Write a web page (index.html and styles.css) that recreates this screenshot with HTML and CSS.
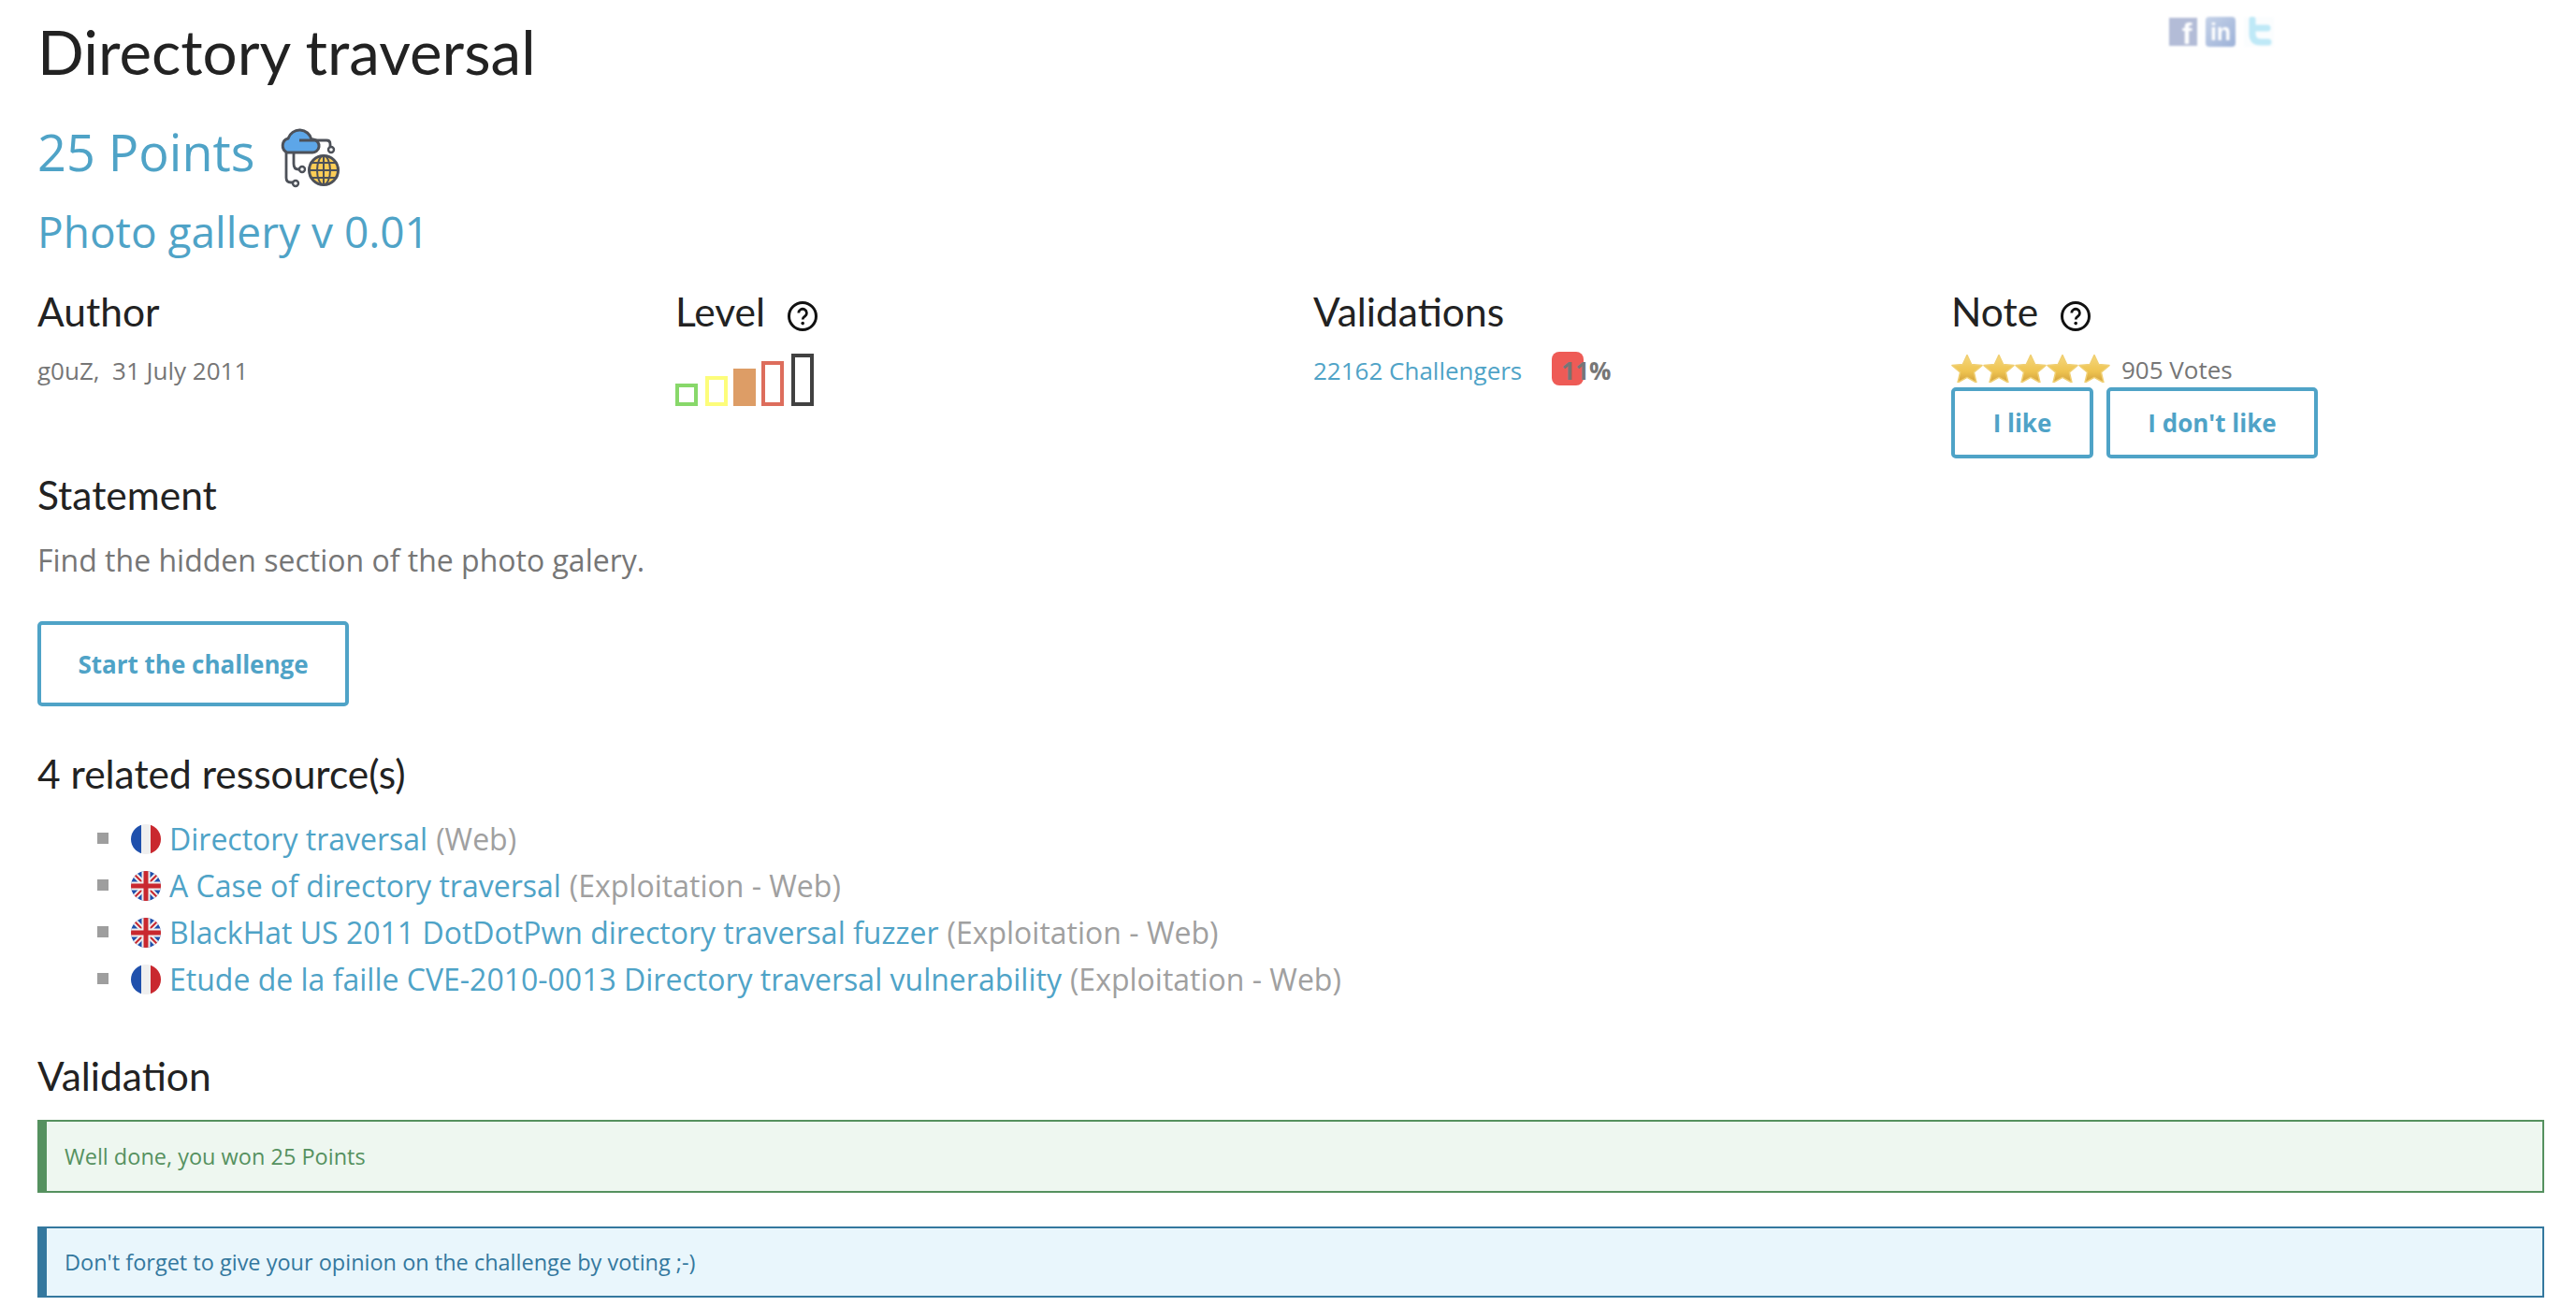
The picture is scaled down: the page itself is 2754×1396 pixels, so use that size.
FILE: index.html
```html
<!DOCTYPE html>
<html lang="en">
<head>
<meta charset="utf-8">
<title>Directory traversal</title>
<link rel="stylesheet" href="styles.css">
</head>
<body>
<svg class="defs" width="0" height="0">
  <defs>
    <linearGradient id="stargrad" x1="0" y1="0" x2="0" y2="1">
      <stop offset="0" stop-color="#f5d77c"/>
      <stop offset="0.6" stop-color="#eec350"/>
      <stop offset="1" stop-color="#d19f3c"/>
    </linearGradient>
    <clipPath id="round"><circle cx="16" cy="16" r="16"/></clipPath>
    <symbol id="star" viewBox="0 0 34 30">
      <path d="M17 0.5 L21.600 10.400 L33 11.600 L24.400 19 L27 30 L17 24.400 L7 30 L9.600 19 L1 11.600 L12.400 10.400 Z" fill="url(#stargrad)" stroke="#f0cf72" stroke-width="1.500" stroke-linejoin="round"/>
    </symbol>
    <symbol id="help" viewBox="0 0 32 32">
      <circle cx="16" cy="16" r="14.500" fill="none" stroke="#111" stroke-width="3"/>
      <path d="M11.800 12.600 a4.300 4.300 0 1 1 6.600 3.600 c-1.500 1 -2.200 1.700 -2.200 3.300" fill="none" stroke="#111" stroke-width="2.800"/>
      <circle cx="16.200" cy="23.600" r="1.800" fill="#111"/>
    </symbol>
    <symbol id="fr" viewBox="0 0 32 32">
      <g clip-path="url(#round)">
        <rect width="11" height="32" fill="#1f50ac"/>
        <rect x="11" width="11" height="32" fill="#efefef"/>
        <rect x="21" width="11" height="32" fill="#c9282f"/>
      </g>
    </symbol>
    <symbol id="uk" viewBox="0 0 32 32">
      <g clip-path="url(#round)">
        <rect width="32" height="32" fill="#1f50ac"/>
        <path d="M0 0 L32 32 M32 0 L0 32" stroke="#efefef" stroke-width="6"/>
        <path d="M0 0 L32 32 M32 0 L0 32" stroke="#c9282f" stroke-width="2"/>
        <path d="M16 0 V32 M0 16 H32" stroke="#efefef" stroke-width="9"/>
        <path d="M16 0 V32 M0 16 H32" stroke="#c9282f" stroke-width="5"/>
      </g>
    </symbol>
  </defs>
</svg>

<div class="social">
  <span class="soc soc-fb">f</span>
  <span class="soc soc-in">in</span>
  <svg class="soc-tw" viewBox="0 0 32 32" width="32" height="32">
    <rect width="32" height="32" fill="#fbfdfe"/>
    <path d="M9 3 V18 Q9 27 18 27 H26 M9 12 H25" fill="none" stroke="#bfe9f7" stroke-width="7" stroke-linecap="round"/>
  </svg>
</div>

<h1 class="title">Directory traversal</h1>
<div class="points">
  <span>25 Points</span>
  <svg class="cat-icon" viewBox="0 0 66 70" width="66" height="70">
    <path d="M7 29 V57 Q7 62 12 62 H14 M15 29 V42 Q15 48 20 48 H21" fill="none" stroke="#4d5159" stroke-width="2.800"/>
    <path d="M8 30 H34 a7 7 0 0 0 2 -14 h-2 a13 13 0 0 0 -25 -1 a8 8 0 0 0 -1 15 Z" fill="#5da6e8" stroke="#4d5159" stroke-width="3"/>
    <path d="M21 17 H50 Q54 17 54 21 V24" fill="none" stroke="#4d5159" stroke-width="2.800"/>
    <circle cx="55" cy="27" r="3" fill="#fff" stroke="#4d5159" stroke-width="2.400"/>
    <circle cx="24" cy="48" r="3" fill="#fff" stroke="#4d5159" stroke-width="2.400"/>
    <circle cx="17" cy="63" r="3" fill="#fff" stroke="#4d5159" stroke-width="2.400"/>
    <circle cx="47" cy="49" r="15.500" fill="#fdcd56" stroke="#4d5159" stroke-width="3"/>
    <ellipse cx="47" cy="49" rx="7" ry="15.500" fill="none" stroke="#4d5159" stroke-width="2"/>
    <path d="M47 33.500 V64.500 M32 49 H62 M35 41 H59 M35 57 H59" fill="none" stroke="#4d5159" stroke-width="2"/>
  </svg>
</div>
<h2 class="subtitle"><a href="#">Photo gallery v 0.01</a></h2>

<div class="meta">
  <section>
    <h3 class="heading">Author</h3>
    <p class="meta-text">g0uZ,&nbsp; 31 July 2011</p>
  </section>
  <section>
    <h3 class="heading">Level <svg class="help"><use href="#help"/></svg></h3>
    <div class="bars">
      <span class="bar bar-1"></span>
      <span class="bar bar-2"></span>
      <span class="bar bar-3"></span>
      <span class="bar bar-4"></span>
      <span class="bar bar-5"></span>
    </div>
  </section>
  <section>
    <h3 class="heading">Validations</h3>
    <p class="meta-text"><a href="#">22162 Challengers</a><span class="pct">11%</span></p>
  </section>
  <section>
    <h3 class="heading">Note <svg class="help"><use href="#help"/></svg></h3>
    <div class="votes">
      <span class="stars">
        <svg class="star"><use href="#star"/></svg><svg class="star"><use href="#star"/></svg><svg class="star"><use href="#star"/></svg><svg class="star"><use href="#star"/></svg><svg class="star"><use href="#star"/></svg>
      </span>
      <span class="votes-text">905 Votes</span>
    </div>
    <div class="vote-buttons">
      <a class="btn btn-like" href="#">I like</a>
      <a class="btn btn-dislike" href="#">I don't like</a>
    </div>
  </section>
</div>

<h3 class="heading statement-h">Statement</h3>
<p class="statement">Find the hidden section of the photo galery.</p>
<a class="btn btn-start" href="#">Start the challenge</a>

<h3 class="heading related-h">4 related ressource(s)</h3>
<ul class="resources">
  <li><svg class="flag"><use href="#fr"/></svg><a href="#">Directory traversal</a> <span class="tag">(Web)</span></li>
  <li><svg class="flag"><use href="#uk"/></svg><a href="#">A Case of directory traversal</a> <span class="tag">(Exploitation - Web)</span></li>
  <li><svg class="flag"><use href="#uk"/></svg><a href="#">BlackHat US 2011 DotDotPwn directory traversal fuzzer</a> <span class="tag">(Exploitation - Web)</span></li>
  <li><svg class="flag"><use href="#fr"/></svg><a href="#">Etude de la faille CVE-2010-0013 Directory traversal vulnerability</a> <span class="tag">(Exploitation - Web)</span></li>
</ul>

<h3 class="heading validation-h">Validation</h3>
<div class="alert alert-success">Well done, you won 25 Points</div>
<div class="alert alert-info">Don't forget to give your opinion on the challenge by voting ;-)</div>
</body>
</html>
```
FILE: styles.css
```css
* { box-sizing: border-box; }
html, body { margin: 0; padding: 0; }
body {
  position: relative;
  padding: 0 34px 0 40px;
  height: 1396px;
  overflow: hidden;
  background: #fff;
  color: #767676;
  font-family: "Open Sans", "Noto Sans", sans-serif;
  font-size: 26px;
}
a { color: #4fa3c7; text-decoration: none; }
.defs { position: absolute; }

.social {
  position: absolute;
  top: 18px;
  left: 2319px;
  display: flex;
  gap: 9px;
  align-items: center;
  filter: blur(0.8px);
}
.soc {
  display: flex;
  align-items: center;
  justify-content: center;
  width: 30px;
  height: 30px;
  font-family: "Liberation Sans", sans-serif;
  font-weight: 700;
  color: #fff;
  line-height: 1;
}
.soc-fb { background: #b3bcd7; font-size: 32px; padding: 4px 0 0 8px; }
.soc-in { width: 32px; height: 32px; border-radius: 4px; background: linear-gradient(135deg, #c5d2e8, #9db2d8); font-size: 25px; }

.title {
  margin: 0;
  padding-top: 15px;
  font-family: "Lato", sans-serif;
  font-weight: 400;
  font-size: 65.500px;
  line-height: 80px;
  color: #222;
}
.points {
  display: flex;
  align-items: center;
  gap: 27px;
  height: 75px;
  margin-top: 30px;
  color: #4fa3c7;
  font-size: 54px;
  line-height: 75px;
}
.cat-icon { margin-top: 10px; }
.subtitle {
  margin: 0;
  padding-top: 16px;
  font-weight: 400;
  font-size: 46px;
  line-height: 62px;
}

.meta {
  display: grid;
  grid-template-columns: repeat(4, 682px);
  margin-top: 30px;
}
.heading {
  margin: 0;
  font-family: "Lato", sans-serif;
  font-weight: 400;
  font-size: 42.500px;
  line-height: 50px;
  color: #222;
}
.help {
  width: 32px;
  height: 32px;
  margin-left: 13px;
  vertical-align: -5px;
}
.meta-text {
  margin: 18px 0 0;
  line-height: 40px;
}
.bars {
  display: flex;
  align-items: flex-end;
  height: 56px;
  margin-top: 20px;
}
.bar { width: 24px; border: 4px solid; margin-right: 6px; }
.bar-1 { height: 24px; border-color: #88d86a; margin-right: 8px; }
.bar-2 { height: 32px; border-color: #fdfd7a; }
.bar-3 { height: 40px; border-color: #dd9d66; background: #dd9d66; }
.bar-4 { height: 48px; border-color: #dd6d5c; margin-right: 8px; }
.bar-5 { height: 56px; border-color: #414141; }

.pct {
  position: relative;
  z-index: 0;
  margin-left: 42px;
  font-weight: 700;
}
.pct::before {
  content: "";
  position: absolute;
  z-index: -1;
  left: -10px;
  top: -2px;
  width: 34px;
  height: 36px;
  border-radius: 8px;
  background: #ee5b56;
}
.votes {
  display: flex;
  align-items: flex-end;
  gap: 12px;
  height: 32px;
  margin-top: 19px;
}
.stars { display: flex; height: 30px; }
.star { width: 34px; height: 30px; }
.votes-text { line-height: 32px; height: 32px; margin-bottom: -2px; }
.vote-buttons {
  display: flex;
  gap: 14px;
  margin-top: 5px;
}
.btn {
  display: inline-flex;
  align-items: center;
  justify-content: center;
  border: 4px solid #4fa3c7;
  border-radius: 5px;
  color: #4fa3c7;
  font-weight: 700;
  font-size: 26px;
}
.btn-like { height: 76px; width: 152px; }
.btn-dislike { height: 76px; width: 226px; }
.btn-start { height: 91px; width: 333px; margin-top: 43px; }

.statement-h { margin-top: 14px; }
.statement {
  margin: 23px 0 0;
  font-size: 32px;
  line-height: 44px;
}
.related-h { margin-top: 47px; }
.resources {
  list-style: none;
  margin: 19px 0 0;
  padding: 0 0 0 64px;
  font-size: 32px;
  color: #a0a0a0;
}
.resources li {
  position: relative;
  display: flex;
  align-items: center;
  gap: 9px;
  height: 50px;
  padding-left: 36px;
  white-space: pre;
}
.resources li::before {
  content: "";
  position: absolute;
  left: 0;
  top: 19px;
  width: 12px;
  height: 12px;
  background: #9e9e9e;
}
.flag { width: 32px; height: 32px; flex: none; margin-top: 2px; }
.validation-h { margin-top: 54px; }
.alert {
  display: flex;
  align-items: center;
  border: 2px solid;
  border-left-width: 10px;
  padding-left: 19px;
  font-size: 23.500px;
}
.alert-success {
  height: 78px;
  margin-top: 22px;
  color: #55915f;
  border-color: #55915f;
  background: #eef7f0;
}
.alert-info {
  height: 76px;
  margin-top: 36px;
  color: #34789e;
  border-color: #34789e;
  background: #e9f6fc;
}
```
